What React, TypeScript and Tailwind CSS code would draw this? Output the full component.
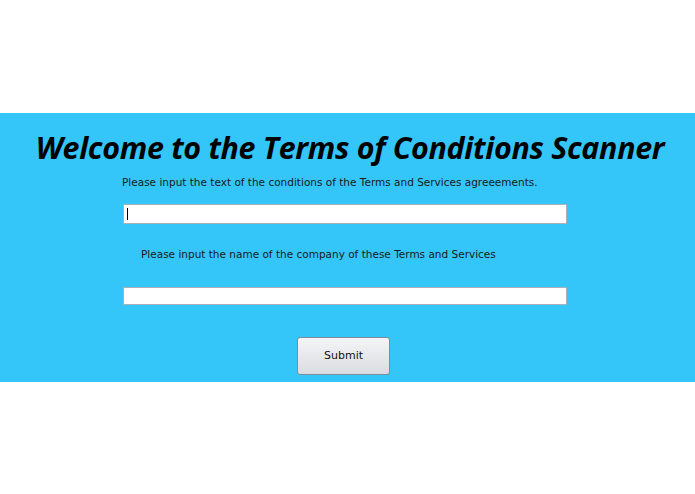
import React from 'react'

export default function App() {
  return (
    <div className="w-[695px] h-[494px] bg-white" style={{ fontFamily: '"DejaVu Sans", sans-serif' }}>
      <div className="h-[113px]" />
      <section className="h-[269px] bg-[#34c6f8] flex flex-col">
        <h1
          className="mt-[17px] pl-[5px] text-center text-[30.4px] leading-[36px] font-bold italic text-black tracking-[-0.3px]"
          style={{ fontFamily: '"Open Sans", sans-serif' }}
        >
          Welcome to the Terms of Conditions Scanner
        </h1>
        <p className="mt-[9px] ml-[122px] text-[10.5px] leading-[14px] text-[#1a1a1a]">
          Please input the text of the conditions of the Terms and Services agreeements.
        </p>
        <div className="relative mt-[15px] ml-[123px] w-[444px] h-[20px]">
          <input
            type="text"
            className="block w-full h-full bg-white border border-[#a9b0b8] outline-none px-[3px] text-[11px]"
          />
          {/* text caret */}
          <span className="absolute left-[4px] top-[4px] w-px h-[12px] bg-black" />
        </div>
        <p className="mt-[23px] ml-[141px] text-[10.5px] leading-[14px] text-[#1a1a1a]">
          Please input the name of the company of these Terms and Services
        </p>
        <input
          type="text"
          className="mt-[26px] ml-[123px] w-[444px] h-[18px] bg-white border border-[#a9b0b8] outline-none px-[3px] text-[11px]"
        />
        <button
          type="button"
          className="mt-[32px] ml-[297px] w-[93px] h-[38px] rounded-[3px] border border-[#7d8c9b] bg-gradient-to-b from-[#f5f5f7] to-[#d9dce1] text-[11px] text-[#111]"
        >
          Submit
        </button>
      </section>
    </div>
  )
}
